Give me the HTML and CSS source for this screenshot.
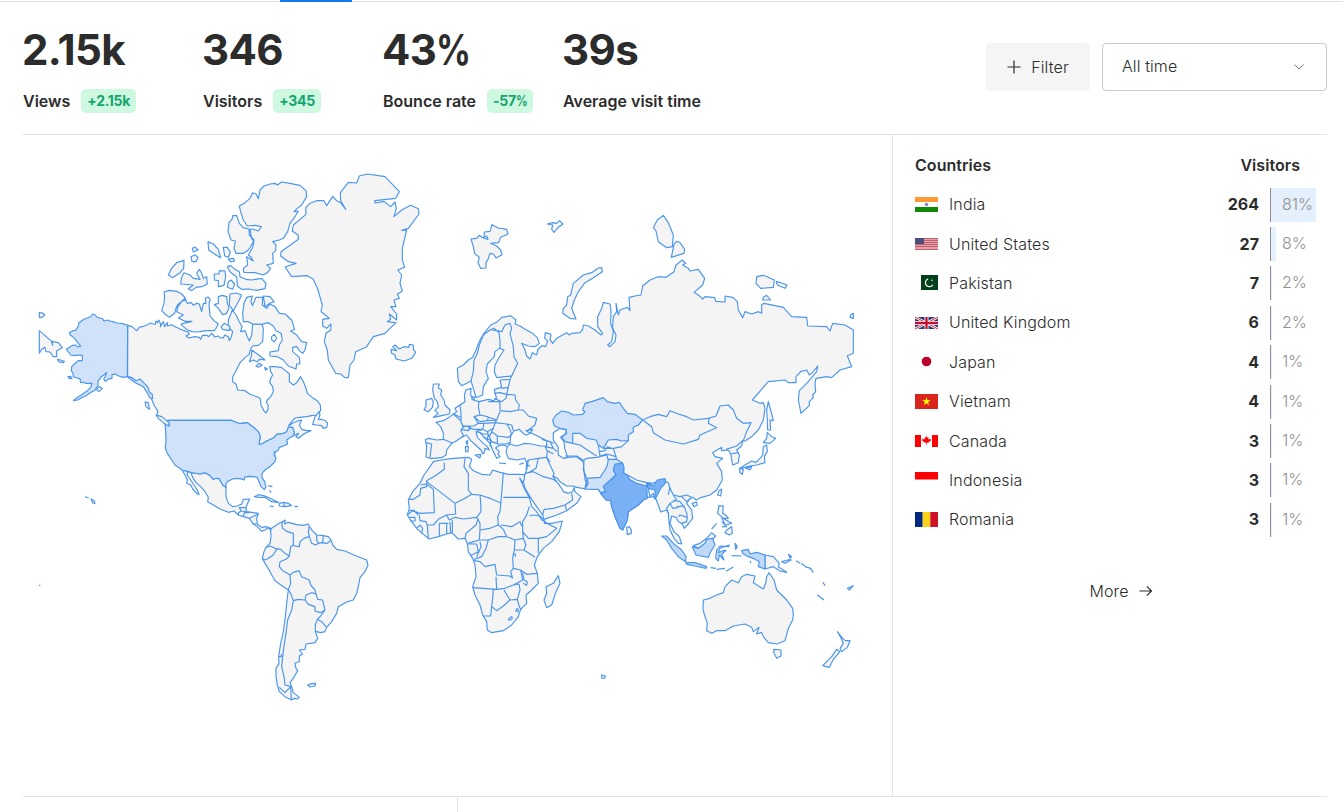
FILE: index.html
```html
<!DOCTYPE html>
<html lang="en">
<head>
<meta charset="utf-8">
<title>Analytics</title>
<link rel="stylesheet" href="styles.css">
</head>
<body>
<div class="tabs"><span class="tab-active"></span></div>
<main class="page">
<header class="summary">
  <div class="metric"><div class="value">2.15k</div><div class="label">Views<span class="badge">+2.15k</span></div></div>
  <div class="metric"><div class="value">346</div><div class="label">Visitors<span class="badge">+345</span></div></div>
  <div class="metric"><div class="value">43<span class="unit">%</span></div><div class="label">Bounce rate<span class="badge">-57<span class="unit">%</span></span></div></div>
  <div class="metric"><div class="value">39s</div><div class="label">Average visit time</div></div>
  <div class="controls">
    <button class="filter"><svg width="14" height="14" viewBox="0 0 14 14"><path d="M7 0.5v13M0.5 7h13"/></svg>Filter</button>
    <div class="select">All time<svg width="12" height="8" viewBox="0 0 12 8"><path d="M1.500 1.500l4.500 4.500 4.500-4.500"/></svg></div>
  </div>
</header>
<section class="panels">
<div class="map">
<svg width="869" height="661" viewBox="23 135 869 661">
<g transform="translate(30 160) scale(.333333)">
<path d="M293,496L306,500 320,512 328,502 343,498 352,494 362,489 370,492 376,493 378,483 383,488 386,480 392,492 391,500 400,485 404,500 412,488 413,498 424,494 436,500 450,507 462,512 474,516 478,522 468,528 476,534 495,530 508,532 512,538 518,526 530,526 536,530 545,520 555,531 565,528 570,533 580,534 584,525 595,530 598,542 604,530 608,515 595,500 595,480 607,450 618,465 628,485 636,500 632,515 645,512 652,530 658,543 665,525 668,492 695,492 700,505 698,545 685,556 668,558 660,570 658,583 645,593 630,608 620,628 608,650 608,665 618,672 623,690 645,692 660,703 685,712 691,716 693,735 702,753 709,759 714,748 714,735 709,725 712,720 722,710 730,695 728,680 719,668 722,655 728,645 722,635 719,620 735,620 755,623 770,635 778,642 778,665 790,675 800,668 812,650 820,665 828,685 832,700 850,715 862,722 871,735 872,752 860,765 845,767 830,770 810,772 795,774 785,785 775,798 790,788 805,782 815,780 808,795 815,808 830,812 843,812 825,820 805,835 798,830 806,820 790,827 793,818 788,802 775,802 770,815 760,820 740,823 732,833 712,842 695,852 687,853 691,830 685,815 668,800 652,788 630,791 608,783 604,781 414,781 410,788 395,775 380,765 384,755 372,735 365,718 358,706 345,680 318,662 293,650Z"/>
<path class="low" d="M293,496L278,491 262,489 248,485 240,483 233,480 222,483 218,476 210,474 200,471 196,465 188,462 182,470 172,474 165,476 155,482 147,488 144,500 137,511 128,512 118,518 121,525 128,530 136,538 143,548 152,558 143,561 138,555 128,556 118,562 109,568 115,576 122,585 134,587 148,585 157,586 157,602 145,602 133,612 125,620 124,632 129,640 130,650 142,655 150,656 152,668 160,667 166,670 180,670 186,669 182,682 170,694 155,704 140,714 130,722 143,720 155,713 168,707 180,699 195,690 204,676 204,664 212,652 222,645 230,637 226,650 221,657 226,664 238,656 246,655 246,644 255,642 266,648 280,652 292,650ZM292,650L304,652 318,662 330,657 343,670 353,680 358,696 367,703 368,716 360,714 352,700 340,680 328,674 316,668 300,656Z"/>
<path d="M402,396L418,391 440,394 455,402 466,414 455,424 443,434 438,445 434,460 418,472 405,462 395,452 402,430 404,410ZM444,440L455,425 466,418 472,430 484,428 490,436 500,430 508,432 515,455 520,430 528,430 526,415 534,411 541,418 537,432 540,468 552,482 565,492 558,505 552,512 530,512 510,515 492,516 475,512 460,500 453,492 470,488 486,484 465,484 445,474 460,465 440,455ZM415,345L425,325 440,308 462,301 461,325 450,338 428,353ZM462,338L480,345 490,355 510,358 500,340 508,328 515,340 520,355 530,350 532,372 515,380 498,382 485,392 475,386 490,375 452,372 455,352ZM483,290L495,285 504,292 498,305 486,305ZM487,265L495,261 504,270 490,276ZM534,245L550,252 565,268 572,293 550,280 536,270ZM553,342L567,342 568,332 585,333 587,350 582,376 565,380 565,362 553,360ZM580,262L592,262 601,277 595,292 584,288ZM565,410L577,406 590,410 592,428 597,445 590,460 578,464 565,445 553,434 565,430ZM573,500L583,490 600,500 598,512 578,508Z"/>
<path d="M28,512L66,545 68,556 64,544 85,548 97,563 80,572 80,590 70,590 60,576 48,575 45,562 35,568 28,580ZM28,458L38,459 44,465 36,472 28,472ZM83,598L92,600 103,604 100,608 86,605ZM114,650L122,649 126,655 118,656ZM199,688L208,680 217,686 207,695ZM345,726L355,728 358,748 348,740ZM165,1010L176,1014M183,1017L192,1022 195,1031 188,1028ZM27,1275L31,1277"/>
</g>
<g transform="translate(220 160) scale(.333333)">
<path d="M72,337L70,325 83,315 80,290 100,303 92,290 85,285 98,262 102,245 95,235 90,208 98,207 115,213 124,200 105,196 82,198 70,180 62,155 58,138 75,128 90,115 98,98 108,102 115,116 120,90 132,78 150,72 165,70 172,75 185,66 210,70 240,76 258,92 260,110 245,135 232,145 222,155 235,153 225,170 210,190 203,215 190,235 178,240 158,245 168,255 167,272 158,280 160,310 140,315 152,325 143,337 130,345 105,338ZM50,167L38,167 36,178 27,188 24,215 33,240 46,243 42,265 48,280 70,280 85,270 98,250 102,240 88,225 87,207 70,203 58,190ZM22,320L32,317 45,328 58,335 60,350 78,358 95,360 125,355 138,370 135,386 110,391 85,387 65,388 52,378 50,350 38,342 30,335ZM25,365L33,360 44,372 38,388 22,382ZM25,297L40,295 44,303 33,306ZM30,402L48,399 65,405 55,425 40,452 28,435Z"/>
<path d="M98,492L85,485 70,485 68,460 72,430 80,412 97,408 93,425 97,437 108,412 128,412 127,435 140,445 150,432 165,440 178,460 195,462 215,480 224,508 212,513 230,525 245,545 260,548 255,570 248,580 238,572 230,560 218,562 218,575 238,592 240,612 230,612 228,627 205,618 190,600 172,590 150,588 150,576 175,572 178,555 187,540 183,520 168,512 160,498 145,488 125,493ZM130,408L150,410 162,425 150,430 135,440ZM95,570L112,582 135,600 118,598 112,606 100,600 88,605 95,585ZM108,618L118,610 126,616 115,622ZM134,622L142,628 136,630Z"/>
<path d="M257,143L270,130 290,122 312,122 320,137 338,109 350,122 362,128 377,148 362,122 361,98 385,67 410,69 418,48 442,42 495,50 538,95 527,115 464,122 466,129 492,124 512,140 525,126 529,145 522,170 545,150 572,136 595,146 597,162 565,205 545,211 560,210 547,265 547,300 554,322 533,330 545,345 540,370 547,393 532,403 538,415 522,420 528,440 512,440 530,462 530,480 508,462 512,478 502,485 528,488 495,520 460,530 440,560 407,575 402,600 390,615 385,653 375,653 362,642 347,640 325,600 322,570 313,545 318,520 332,510 333,492 320,505 308,498 308,478 328,475 312,462 303,455 307,435 293,387 280,358 262,347 215,350 195,321 228,310 205,305 182,288 183,275 235,238 235,226 217,213 220,195 258,163ZM513,568L530,572 518,560 525,555 538,567 552,560 566,562 568,553 580,555 580,568 587,577 575,595 553,603 528,597 525,585 515,580Z"/>
<path class="sea" d="M155,530L163,523 170,535 163,545 155,540Z"/>
</g>
<g transform="translate(150 390) scale(.333333)">
<path d="M96,240L105,255 112,270 110,280 122,285 128,297 140,310 147,314 142,300 132,285 122,270 112,255 112,245 122,247 128,262 138,278 152,290 165,305 175,322 173,335 190,345 210,357 235,367 252,363 265,375 280,380 298,385 308,400 322,410 335,424 345,420 355,413 365,425 362,415 350,410 335,412 322,402 320,385 325,370 305,367 290,365 288,353 292,342 299,327 280,328 275,342 262,348 248,350 235,340 228,320 228,292 218,285 208,266 198,265 190,268 178,255 165,248 150,252 125,248Z"/>
<path class="border" d="M265,375V368L274,363 268,353H288M280,380L283,368 298,368M298,385L312,378 325,372M308,402L320,402M274,363L290,365"/>
<path class="low" d="M54,91H244L248,93 270,101 292,98 308,110 325,125 331,140 327,163 335,162 352,152 372,143 380,133 400,130 410,125 415,112 428,112 433,128 430,137 420,143 410,150 413,162 400,168 388,172 384,182 374,186 372,196 378,203 375,215 362,228 345,240 336,250 336,262 344,275 348,290 343,299 333,290 327,275 322,262 310,260 295,259 283,262 283,270 270,266 250,266 235,273 228,280 228,292 218,285 208,266 198,265 190,268 178,255 165,248 150,252 125,248 110,243 96,240 75,225 65,210 52,190 46,175 48,150 47,125 45,100 58,108Z"/>
<path d="M507,65L495,80 488,103 500,105 515,107 520,115 530,112 533,100 526,92 515,88 505,88 510,75ZM313,320L325,314 345,318 365,327 385,337 365,335 345,322 325,322ZM388,340L400,337 415,340 425,347 405,350 388,348ZM400,337L404,349M359,348L371,350M433,349L444,350M355,287L367,290M359,300L363,308M18,75L35,80 50,92 58,100 55,108 40,98 25,85ZM370,190L376,184 374,200"/>
</g>
<g transform="translate(250 510) scale(.333333)">
<path d="M62,60L65,55 75,48 90,38 100,34 106,30 104,42 115,37 140,44 160,46 175,42 178,50 187,62 200,75 215,76 235,80 243,90 248,105 260,118 285,123 305,132 325,140 350,150 354,165 345,185 330,203 326,225 320,250 310,270 290,276 265,290 260,310 245,335 230,352 225,365 212,368 196,364 203,385 195,398 168,402 165,418 148,420 158,432 148,438 148,455 135,460 138,475 143,482 130,505 120,518 125,530 130,548 148,562 142,567 133,565 125,570 105,560 88,545 82,525 78,500 78,475 87,460 86,440 92,400 100,365 106,320 110,280 115,240 100,230 75,212 60,185 42,155 37,145 42,125 48,112 60,100 63,80Z"/>
<path class="border" d="M115,240L122,250 130,272 125,300 113,330 108,370 103,400 98,440 95,470 102,500 105,525 125,530M115,240L122,220 120,195 130,187 147,182 155,200 178,210 182,225 195,240 198,252M130,272L145,268 165,270 168,255 185,248 198,252 203,268 218,270 222,288 225,300 212,308 195,303 195,290 175,283 165,270M225,300L212,318 202,328 196,345 196,364M202,328L215,335 230,352M120,195L112,190 98,182 88,170 90,155 108,148 118,138 122,110 130,105 130,70 112,65 98,55 95,42 100,34M48,112L60,108 75,115 92,118 105,130 118,138M80,118L70,135 55,145 45,150 37,145M130,105L135,108 148,110 150,95 162,85 178,80 175,65 178,50M178,80L185,100 197,105 205,100 215,98 232,100 243,90M200,75L200,90 205,100M220,77L218,98M88,532L105,548 122,530 124,568M86,440H94V432"/>
<path d="M173,525L185,521 197,520 195,528 180,531Z"/>
</g>
<g transform="translate(400 300) scale(.333333)">
<path d="M213,243L200,250 185,257 175,245 172,205 190,195 205,180 218,172 228,150 240,120 252,100 272,75 290,67 305,52 320,50 332,47 348,60 345,72 360,78 375,88 395,98 412,113 418,130 405,140 385,138 365,130 375,150 380,168 390,177 397,158 410,165 413,150 425,137 437,140 443,122 434,115 436,98 453,103 450,118 458,130 470,115 500,98 508,105 515,100 540,98 548,88 550,75 565,78 585,90 603,105 608,100 593,80 593,50 605,25 610,7 630,12 633,30 632,70 640,95 635,125 623,135 630,140 645,125 648,105 638,85 640,50 650,35 648,10 655,45 660,30 682,22 690,32 687,-8 705,-12 723,-15 728,-42 750,-60 775,-70 798,-68 822,-85 828,-105 847,-120 857,-110 848,-105 865,-95 870,-87 895,-92 914,-65 908,-45 882,-23 898,-13 908,-3 915,-10 944,-7 947,4 975,6 975,-12 1000,-7 1012,5 1015,30 1028,53 1035,35 1055,42 1075,35 1085,40 1085,15 1092,10 1150,22 1175,50 1220,52 1223,78 1280,80 1290,93 1298,70 1335,75 1360,90 1360,160 1342,167 1355,200 1320,210 1295,233 1280,230 1248,235 1245,250 1247,275 1238,285 1240,293 1228,305 1228,317 1203,340 1195,300 1198,272 1220,250 1250,215 1253,198 1240,215 1228,225 1220,210 1202,215 1188,230 1188,248 1165,248 1155,240 1105,245 1057,300 1080,310 1090,308 1095,325 1090,360 1075,390 1055,410 1035,423 1028,422 1025,438 1010,450 1018,465 1015,488 998,495 995,478 992,462 985,450 965,452 965,442 938,458 945,470 968,475 950,490 965,515 967,540 950,570 930,585 905,592 888,600 880,592 868,598 860,610 875,630 878,655 865,672 853,685 845,670 835,665 828,652 815,648 810,670 822,695 838,710 845,732 835,730 822,715 810,690 807,665 805,640 800,630 782,636 775,615 765,590 742,592 730,600 715,615 685,635 682,660 668,690 660,685 645,650 635,620 632,602 618,600 602,580 595,568 560,567 530,562 518,558 500,558 480,545 470,533 458,528 470,545 485,565 490,575 505,580 518,575 522,563 525,575 543,590 530,610 500,632 470,645 432,658 428,645 410,620 395,598 375,565 370,545 372,530 378,515 380,490 375,475 350,480 325,475 318,455 322,440 310,435 298,436 287,444 298,455 294,462 300,470 290,475 278,450 270,430 255,415 240,398 228,395 232,412 250,430 262,440 268,450 255,445 253,458 248,462 243,450 230,438 212,422 200,405 185,412 165,425 155,430 140,450 138,465 125,473 100,475 88,475 78,470 80,440 76,420 85,415 110,420 130,418 130,400 122,380 108,367 130,362 150,350 160,342 170,335 165,325 180,315 195,305 193,285 198,270 213,265 212,285 220,300 237,305 265,298 280,302 290,295 285,280 283,268 305,262 300,240 330,238 335,228 290,233 283,215 285,195 302,165 312,150 298,145 285,155 283,170 262,192 258,215 265,235 250,260 248,285 228,293 220,265Z"/>
<path class="sea" d="M330,432L332,408 342,393 358,388 372,402 378,405 392,400 378,392 398,388 392,398 420,412 440,422 440,438 420,438 395,432 375,430 350,438ZM460,398L480,385 498,388 498,400 482,412 492,425 494,445 503,472 490,475 475,465 474,440 460,420Z"/>
<path class="border" d="M213,243L220,215 222,180 232,160 238,135 250,105 270,90 282,85 297,98 300,120 300,148M275,90L290,92 305,95 315,75 330,70 335,85 330,100 340,140 342,170 353,190 335,228M330,238L325,262 305,265M283,280L300,278 320,283 325,262M283,295L305,305 318,295 320,283 345,285 347,300 358,315 355,330 330,335 300,332V310L298,305H265M237,305L235,320 240,345 262,350 290,360 300,335M180,315L183,340 183,365 188,378 222,378 235,370 222,350 240,345M222,350L240,365 262,362 265,352M160,342L182,352M160,342L182,362 190,380 183,392 190,405 185,412M183,388L195,378 212,382 205,392ZM205,385L225,388 248,388 252,370 235,370M252,370L285,368 280,385 262,395 248,388M285,368L320,372 330,388 335,405 325,412 292,408 275,395 280,385M355,330L370,330 385,348 410,355 405,375 385,390M262,362L290,360 285,368M320,372L335,375 340,392M292,408V432L318,432 330,428M322,440L330,432M228,395L248,388M262,395L268,410 275,395M240,398L250,402 265,402 262,418 250,410M268,410L275,425 290,430M262,418L272,420 270,440M275,425L268,432M130,418L158,430M78,428L95,432 90,472M435,440L442,452 440,472 415,475 385,480 380,490M425,418L450,425 462,430M435,440L460,445 470,455M442,452L460,462M450,425L460,445M440,472L450,485"/>
<path class="border" d="M385,480L380,510M415,475L408,505 385,518 376,520M385,518L400,515 430,530 460,538 470,545M440,472L450,495 462,520 460,528M432,628L460,625 495,615 500,632M495,615L518,600 515,580M503,472L530,470 550,485 552,510 555,540 562,550 555,567M432,628L428,645M382,500L390,495"/>
<path d="M100,252L118,252 115,265 125,270 122,285 132,300 135,315 150,330 148,342 125,347 100,352 115,340 105,332 115,320 112,305 103,295 98,270ZM78,300L95,295 100,305 97,322 85,335 72,330 78,318ZM198,425L203,422 202,435ZM196,440L205,440 204,455 197,455ZM225,465L242,463 240,474ZM297,489L318,491M358,493L372,489M218,290L224,292 222,299 215,297Z"/>
</g>
<g transform="translate(400 440) scale(.333333)">
<path d="M100,65L125,60 160,55 205,52 215,58 208,80 220,92 245,103 270,105 278,90 300,97 325,103 355,103 374,104 372,120 368,128 359,114 375,150 388,172 395,200 410,215 425,240 435,245 433,250 455,250 487,243 478,275 455,305 430,325 412,350 403,375 412,400 415,430 395,450 378,465 380,490 362,508 355,530 335,555 310,572 275,578 262,570 260,545 248,525 240,495 225,465 218,440 228,410 225,375 218,355 205,335 202,310 195,295 175,297 155,278 140,282 115,290 88,297 70,283 50,265 35,245 22,225 28,205 25,180 38,155 60,130 72,105 90,80Z"/>
<path class="border" d="M133,68V88L105,108 80,122V132L62,135M80,132V140L62,145 60,165 40,178H25M80,132L100,148 103,218 60,220 45,215 28,210M80,125L165,190 190,178 215,163 205,150V100L192,80 195,55M215,163L240,165 270,175 300,188 303,185 310,98M310,172H388M165,190L167,222 140,225 115,238 100,255 82,255 78,245 60,242 58,225M140,225L148,240 165,232 190,237 230,232 243,215 242,185 240,165M235,235L228,255 210,270 198,280 195,297M230,232L240,250V270L270,265 295,255 293,230 300,215 303,185M240,270L238,300 205,310M238,300L265,300 295,290 320,290M295,255L310,268 320,290M303,255L335,260 360,245 365,258M320,290L345,300 370,295 368,275M388,200L380,225 368,245V275L385,295 415,295 440,290 470,265 440,250 420,228 400,225 388,228M370,295L378,315 372,330 405,352M415,295V340M345,300L343,330 372,330M343,330L338,355 340,385 332,395 338,415M265,300L258,325 245,350 222,358M222,362L240,365 255,380 285,373 290,405 330,408 338,415M205,312L230,312 235,335 215,345V352M240,305L243,320 230,350M218,443L290,448 288,410M290,448L315,445 340,435 368,420 362,390 340,385M362,390L380,403 412,400M368,398L372,420 382,425 380,436 370,430M280,448L278,475 275,500 272,528 250,528M275,500L290,512 310,498 330,480 312,450M330,480L352,478 360,450 357,432 340,435M352,478L358,500 362,508M118,250V290M140,250V282M150,245L152,280M157,240V278M82,255L85,295M50,265L60,255 68,265 65,280M118,250H145M28,232H45V243H30M22,225L40,210 55,225M325,538A6,6 0 1 0 335,530ZM350,506L355,508 354,516 348,513ZM338,342H346V350"/>
<path d="M475,407L480,430 468,455 455,495 440,503 432,480 440,460 438,440 460,430Z"/>
</g>
<g transform="translate(540 200) scale(.333333)">
<path d="M340,83L352,60 370,46 385,68 400,105 397,140 380,143 355,125 348,93ZM402,133L410,124 420,128 434,148 432,160 394,172ZM185,203L187,215 160,233 135,248 115,275 103,300 95,325 108,357 90,355 68,340 70,325 80,315 83,290 92,285 100,250 130,225 155,218 175,204ZM650,230L670,226 703,240 700,262 662,265 648,250ZM709,245L722,248 741,255 735,265 712,255ZM670,292L680,286 692,300 668,300ZM940,340V355L930,352 932,345ZM22,72L38,68 50,70 58,62 69,72 55,82 42,97 35,88 38,75Z"/>
<path d="M-207,117L-190,115 -182,106 -174,112 -156,118 -160,108 -168,112 -167,96 -150,94 -144,74 -125,84 -100,88 -96,102 -118,112 -124,128 -148,130 -130,138 -118,150 -114,164 -132,174 -140,162 -150,160 -156,178 -162,188 -162,204 -178,205 -186,188 -182,172 -196,160 -200,140Z"/>
</g>
<g transform="translate(570 380) scale(.333333)">
<path class="border" d="M218,120L240,110 265,103 290,110 300,92 325,102 350,110 370,120 415,115 438,108 450,78 475,75 490,90 500,115 520,130 543,128 530,155 520,182M218,120L245,140 250,158 285,180 340,192 385,178 390,165 440,143 415,130 418,112M468,208L500,198 518,182M482,222L505,218M175,182L155,200 130,205 138,230 140,245 160,255 162,280 178,288 200,300 230,308 250,310 275,298 295,308 298,320 310,345 330,350 350,345 365,352M8,190L30,195 60,215 80,228M-15,228L20,228 42,242 40,270 50,295 45,325M85,195L90,228 110,222 138,230M100,205H130M90,215L105,212 112,200 125,205M42,240L50,235 80,232 110,225 115,240M232,308L250,318M310,345L320,360 300,370 290,385 295,400M310,360L330,365 345,385 350,400 352,412M335,350L350,365 365,352M320,380L345,378M325,410L330,405 352,412 350,425 335,430M300,320L295,345M300,370L308,385 325,382M235,325L240,350 250,340 255,358"/>
<path class="low" d="M-52,120L-42,105 -25,93 -5,97 10,105 38,103 45,95 38,90 45,70 65,65 100,53 112,65 135,70 148,67 160,85 172,100 195,103 218,120 205,135 190,142V155L175,165V182L155,183 140,178 115,180 100,205 85,195 78,180 50,175 30,160H8V190L-15,185 -25,172 -10,160 -12,148 -30,145 -47,138ZM115,238L140,238 158,250 135,255 130,270 138,285 110,310 100,320 108,335 92,338 85,328 45,327 55,310 50,295 90,292 105,270 112,255Z"/>
<path class="high" d="M135,252L158,250 162,262 160,278 175,288 178,298 200,310 230,318V308L232,355 220,360 205,375 175,395 172,420 158,450 150,445 135,410 125,380 122,362 108,360 92,340 108,335 100,320 138,285 130,270ZM232,310L250,318 262,300 285,296 287,308 272,325 262,345 255,358 255,330 235,325Z"/>
<path d="M170,442L178,440 184,450V460L172,464ZM455,327L452,348 443,345 447,332ZM366,370L380,366 382,375 372,380ZM590,195L592,215 583,230 585,248 560,255 540,258 525,262 510,265 520,258 545,243 558,247 570,235 578,225 580,200ZM508,265L520,268 517,283 510,278ZM527,265L545,260 540,270ZM592,158L605,170 617,175 600,190 580,188 590,175ZM595,65L602,90 610,122 600,120 602,150 593,150 592,120 590,90ZM447,377L460,378 458,400 470,408 475,415 460,415 443,400ZM455,412L468,420 485,430 465,435ZM470,450L485,440 487,460 478,465 465,458ZM440,430L425,447M455,425L470,440 456,440M370,497L390,490 410,475 425,458 437,468 428,478 412,480 405,492 385,505ZM585,525L610,530 628,550 625,560 650,577 630,573 610,560 585,567ZM635,545L655,540 665,530 655,523 663,540 645,550ZM678,542L690,550M693,550L705,558M705,560L722,565 730,578M758,606L766,618M742,645L762,660M832,625L850,617 838,630ZM611,808L633,810 633,828 620,835 612,820ZM802,755L818,775 826,782 840,782 832,802 815,815 810,805 820,790 812,772ZM800,808L810,815 790,838 778,862 758,857 785,830ZM95,885L107,888 103,895 95,894Z"/>
<path d="M400,660L420,655 440,645 460,638 465,620 485,600 505,608 515,590 530,583 555,588 550,608 580,627 587,610 590,590 597,578 612,600 620,630 650,660 668,685 670,705 668,720 655,745 645,782 620,792 595,788 580,770 575,757 560,762 567,742 550,755 545,742 525,732 490,738 465,752 440,752 425,760 410,752 412,730 402,700 399,685Z"/>
<path class="mid" d="M275,468L290,468 310,490 335,510 348,530 347,545 325,530 305,505 290,480ZM347,547L375,548 410,560 408,565 375,558 350,553ZM422,563L438,565M440,568L465,565M468,574L490,561M367,500L385,505 405,490 410,478 428,475 435,495 422,515 415,532 378,525ZM440,510L450,498 475,500 478,495 450,505 445,518 458,512 468,512 455,522 462,540 448,525 445,543 437,535ZM495,490L502,500 497,508ZM485,527L515,528M515,512L535,508 540,522 560,517 585,525 585,567 565,560 568,545 550,535 535,530 520,522ZM540,543L543,550"/>
</g>
</svg>
</div>
<aside class="countries">
  <div class="head"><span>Countries</span><span>Visitors</span></div>
  <div class="row"><svg class="flag" viewBox="0 0 23 15"><path fill="#f93" d="M0 0h23v5H0z"/><path fill="#fff" d="M0 5h23v5H0z"/><path fill="#128807" d="M0 10h23v5H0z"/><circle cx="11.5" cy="7.5" r="1.8" fill="#8888c6"/></svg><span class="name">India</span><b>264</b><span class="pct"><i style="width:81%"></i>81%</span></div>
  <div class="row"><svg class="flag" viewBox="0 0 23 15"><path fill="#dfa3ac" d="M0 2h23v12H0z"/><path stroke="#c55d6c" d="M0 2.5h23M0 4.5h23M0 6.5h23M0 8.5h23M0 10.5h23M0 13.5h23"/><path fill="#4e4d7b" d="M0 2h9v6H0z"/></svg><span class="name">United States</span><b>27</b><span class="pct"><i style="width:9%"></i>8%</span></div>
  <div class="row"><svg class="flag" viewBox="0 0 23 15"><path fill="#00401a" d="M6 0h17v15H6z"/><path fill="none" stroke="#e4ece6" stroke-width="1.3" d="M13.200 3.900a4 4 0 1 0 4.700 5.800"/><circle cx="17" cy="5.300" r=".8" fill="#e4ece6"/></svg><span class="name">Pakistan</span><b>7</b><span class="pct"><i style="width:2%"></i>2%</span></div>
  <div class="row"><svg class="flag" viewBox="0 0 23 15"><path fill="#263b7b" d="M0 2h23v12H0z"/><path stroke="#fff" stroke-width="2.500" d="M0 2l23 12M0 14L23 2"/><path stroke="#d22b45" d="M0 2l23 12M0 14L23 2"/><path stroke="#fff" stroke-width="4" d="M11.500 2v12M0 8h23"/><path stroke="#c8102e" stroke-width="2.300" d="M11.500 2v12M0 8h23"/></svg><span class="name">United Kingdom</span><b>6</b><span class="pct"><i style="width:2%"></i>2%</span></div>
  <div class="row"><svg class="flag" viewBox="0 0 23 15"><circle cx="11.500" cy="7.500" r="4.800" fill="#bc002d"/></svg><span class="name">Japan</span><b>4</b><span class="pct"><i style="width:1%"></i>1%</span></div>
  <div class="row"><svg class="flag" viewBox="0 0 23 15"><path fill="#da251d" d="M0 0h23v15H0z"/><path fill="#ff0" d="M11.500 3.200l1 3.100h3.200l-2.600 1.900 1 3-2.600-1.900-2.600 1.900 1-3-2.600-1.900h3.200z"/></svg><span class="name">Vietnam</span><b>4</b><span class="pct"><i style="width:1%"></i>1%</span></div>
  <div class="row"><svg class="flag" viewBox="0 0 23 15"><path fill="red" d="M0 2h6v12H0zM17 2h6v12h-6zM11.500 3l1 1.800 1-.4-.2 2 2-.7.8 1.600-3 2.500h-1.300V12h-.6V9.800H9.900l-3-2.500.8-1.600 2 .7-.2-2 1 .4z"/></svg><span class="name">Canada</span><b>3</b><span class="pct"><i style="width:1%"></i>1%</span></div>
  <div class="row"><svg class="flag" viewBox="0 0 23 15"><path fill="red" d="M0 0h23v7.500H0z"/></svg><span class="name">Indonesia</span><b>3</b><span class="pct"><i style="width:1%"></i>1%</span></div>
  <div class="row"><svg class="flag" viewBox="0 0 23 15"><path fill="#00287e" d="M0 0h7.700v15H0z"/><path fill="#fcd116" d="M7.700 0h7.600v15H7.700z"/><path fill="#ce1126" d="M15.300 0H23v15h-7.700z"/></svg><span class="name">Romania</span><b>3</b><span class="pct"><i style="width:1%"></i>1%</span></div>
  <div class="more">More<svg width="14" height="12" viewBox="0 0 14 12"><path d="M.5 6h12M7.800 1.300L12.500 6l-4.700 4.700"/></svg></div>
</aside>
</section>
<section class="next"><div class="next-left"></div></section>
</main>
</body>
</html>
```
FILE: styles.css
```css
* { box-sizing: border-box; }
body { margin: 0; width: 1343px; height: 812px; overflow: hidden; background: #fff; color: #2c2c2c; font: 300 16px/24px Inter, sans-serif; }
.tabs { height: 2px; padding-left: 280px; background: linear-gradient(#fff 50%, #e1e1e1 50%); }
.tab-active { display: block; width: 72px; height: 2px; background: #1379f3; }
.page { padding: 0 16px 0 23px; }
.summary { display: flex; height: 133px; border-bottom: 1px solid #e1e1e1; }
.metric { width: 180px; padding-top: 21px; white-space: nowrap; }
.value { height: 54px; margin-left: -1px; font-size: 42px; line-height: 54px; font-weight: 700; letter-spacing: -.6px; }
.unit { display: inline-block; transform: scaleX(.82); transform-origin: left; margin-right: -.17em; }
.label { display: flex; align-items: center; height: 24px; margin-top: 12px; font-weight: 600; line-height: 22px; padding-bottom: 1px; }
.badge { margin-left: 11px; padding: 0 6px; border-radius: 5px; background: #cef8e0; color: #15a46e; font-size: 14px; font-weight: 700; letter-spacing: -.3px; line-height: 23px; height: 24px; }
.controls { display: flex; gap: 12px; margin-left: auto; padding-top: 41px; }
.filter { display: flex; align-items: center; justify-content: center; gap: 10px; width: 104px; height: 48px; padding: 0; border: 0; border-radius: 4px; background: #f5f5f5; color: #2c2c2c; font: 300 16px Inter, sans-serif; letter-spacing: .15px; }
.filter svg, .select svg, .more svg { fill: none; stroke: #2c2c2c; stroke-width: 1.2; }
.select { display: flex; align-items: center; justify-content: space-between; width: 225px; height: 48px; padding: 0 21px 2px 19px; border: 1px solid #c9c9c9; border-radius: 4px; letter-spacing: .1px; }
.select svg { stroke: #747474; stroke-width: 1; margin-top: 2px; }
.panels { display: flex; height: 662px; border-bottom: 1px solid #e1e1e1; }
.map { width: 869px; }
.map svg { display: block; }
.map path { fill: #f4f4f4; stroke: #4a95ec; stroke-width: 1.15px; stroke-linejoin: round; vector-effect: non-scaling-stroke; }
.map .border { fill: none; }
.map .sea { fill: #fff; }
.map .low { fill: #d0e2fa; }
.map .mid { fill: #bfdaf9; }
.map .high { fill: #7ab1f4; }
.countries { flex: 1; padding: 18px 0 0 22px; border-left: 1px solid #e1e1e1; }
.head { display: flex; justify-content: space-between; height: 32px; padding-right: 27px; font-weight: 600; letter-spacing: .05px; }
.row { display: flex; align-items: center; height: 39.4px; }
.flag { width: 23px; height: 15px; margin: -1px 11px 0 0; }
.name { flex: 1; margin-top: -1px; letter-spacing: .15px; }
.row b { margin-top: -1px; font-weight: 700; }
.pct { position: relative; width: 57px; height: 34px; margin-left: 11px; padding-left: 11px; border-left: 1px solid #8c9096; color: #8f8f8f; line-height: 32px; z-index: 0; }
.pct i { position: absolute; z-index: -1; left: 0; top: 0; height: 34px; background: #e5f0fd; }
.more { display: flex; align-items: center; justify-content: center; gap: 10px; margin-top: 39px; letter-spacing: .15px; }
.next-left { width: 435px; height: 20px; border-right: 1px solid #e1e1e1; }
```
